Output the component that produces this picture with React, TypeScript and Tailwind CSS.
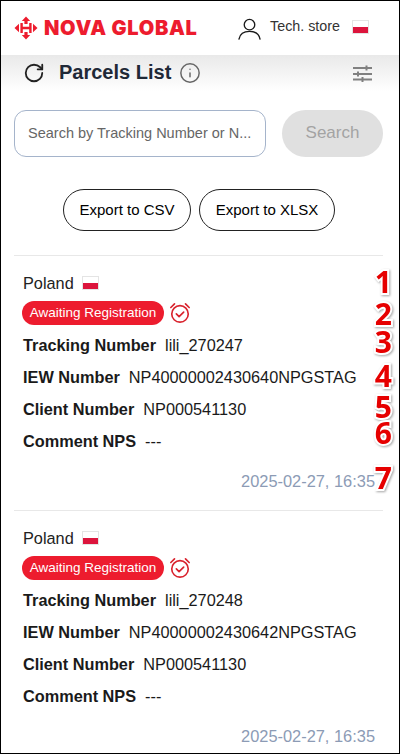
import React from 'react';
import { RotateCw, Info } from 'lucide-react';

const Flag = () => (
  <div className="flex h-[14px] w-[17px] flex-col border border-[#e4e4e4]">
    <div className="h-[6px] bg-white" />
    <div className="flex-1 bg-[#dc143c]" />
  </div>
);

const Logo = () => (
  <div className="flex items-center gap-[6px]">
    <svg width="24" height="24" viewBox="0 0 24 24" fill="#ed1c2e">
      <path d="M12 0.5 L16.2 5 L13.6 5 L13.6 8 L10.4 8 L10.4 5 L7.8 5 Z" />
      <path d="M12 23.5 L7.8 19 L10.4 19 L10.4 16 L13.6 16 L13.6 19 L16.2 19 Z" />
      <path d="M0.5 12 L5 7.8 L5 16.2 Z" />
      <path d="M23.5 12 L19 7.8 L19 16.2 Z" />
      <path d="M6.4 7 L8.8 7 L8.8 10.8 L15.2 10.8 L15.2 7 L17.6 7 L17.6 17 L15.2 17 L15.2 13.2 L8.8 13.2 L8.8 17 L6.4 17 Z" />
    </svg>
    <span className="font-['Inter',sans-serif] text-[20px] leading-none font-black tracking-[0.7px] text-[#ed1c2e]">
      NOVA GLOBAL
    </span>
  </div>
);

const Mark = ({ n, className }: { n: string; className: string }) => (
  <span
    className={`absolute right-[-9px] font-['Open_Sans',sans-serif] text-[30px] leading-none font-bold text-[#e60000] [paint-order:stroke_fill] [-webkit-text-stroke:4px_white] [filter:drop-shadow(1px_1px_1px_rgba(0,0,0,0.35))] ${className}`}
  >
    {n}
  </span>
);

const Field = ({ label, value }: { label: string; value: string }) => (
  <div className="mt-[12px] ml-[1px] flex h-[20px] items-center gap-[9px] text-[16.3px] text-[#1a1a1a]">
    <span className="font-bold">{label}</span>
    <span>{value}</span>
  </div>
);

const Parcel = ({ tracking, iew, marks }: { tracking: string; iew: string; marks?: boolean }) => (
  <div className="relative border-t border-[#e8e8e8] pt-[17px] pr-[8px] pl-[8px]">
    <div className="ml-[1px] flex h-[20px] items-center gap-[8px] text-[16.3px] text-[#222]">
      <span>Poland</span>
      <Flag />
    </div>
    <div className="mt-[8px] mb-[-2px] flex h-[24px] items-center gap-[5px]">
      <span className="flex h-[24px] w-[142px] items-center justify-center rounded-full bg-[#ed1c2e] text-[13.5px] whitespace-nowrap text-white">
        Awaiting Registration
      </span>
      <svg width="22" height="22" viewBox="0 0 24 24" fill="none" stroke="#d9232e" strokeWidth="1.8" strokeLinecap="round" strokeLinejoin="round">
        <circle cx="12" cy="13" r="9" />
        <path d="M8 13l3 3 5-5M2 6l4-4M22 6l-4-4" />
      </svg>
    </div>
    <div className="mt-[4px]" />
    <Field label="Tracking Number" value={tracking} />
    <Field label="IEW Number" value={iew} />
    <Field label="Client Number" value="NP000541130" />
    <Field label="Comment NPS" value="---" />
    <div className="mt-[20px] h-[20px] text-right text-[16.4px] leading-[20px] text-[#8c9bb5]">2025-02-27, 16:35</div>
    <div className="h-[19px]" />
    {marks && (
      <>
        <Mark n="1" className="top-[11px]" />
        <Mark n="2" className="top-[43px]" />
        <Mark n="3" className="top-[71px]" />
        <Mark n="4" className="top-[105px]" />
        <Mark n="5" className="top-[136px]" />
        <Mark n="6" className="top-[162px]" />
        <Mark n="7" className="top-[207px]" />
      </>
    )}
  </div>
);

export default function App() {
  return (
    <div className="box-border h-[754px] overflow-hidden border border-black bg-white font-['Liberation_Sans',sans-serif]">
      <header className="flex h-[54px] items-center justify-between pr-[30px] pl-[13px]">
        <Logo />
        <div className="flex items-center">
          <svg width="23" height="23" viewBox="0 0 24 24" fill="none" stroke="#1a1a1a" strokeWidth="1.4" strokeLinecap="round">
            <circle cx="12" cy="8" r="5.5" />
            <path d="M1 23c1-5 5-8 11-8s10 3 11 8" />
          </svg>
          <span className="mt-[-3px] ml-[9px] text-[14.3px] text-[#333]">Tech. store</span>
          <div className="mt-[-3px] ml-[12px]"><Flag /></div>
        </div>
      </header>
      <div className="flex h-[36px] items-center bg-gradient-to-b from-[#e9e9e9] to-white pr-[27px] pl-[22px]">
        <RotateCw size={22} strokeWidth={2} className="text-[#222]" />
        <h1 className="mt-[-3px] ml-[14px] text-[20px] font-bold text-[#1f2937]">Parcels List</h1>
        <Info size={22} strokeWidth={1.6} className="ml-[8px] text-[#666]" />
        <svg width="19" height="19" viewBox="0 0 19 19" fill="none" stroke="#808080" strokeWidth="2" className="ml-auto">
          <path d="M0 4h19M13.5 1.5v5M0 10h19M5 7.5v5M0 15.5h19M9.5 13v5" />
        </svg>
      </div>
      <div className="mt-[19px] flex gap-[16px] px-[13px]">
        <div className="flex h-[47px] w-[252px] items-center rounded-[12px] border border-[#a5b4cb] pl-[13px] text-[14.5px] whitespace-nowrap text-[#666]">
          Search by Tracking Number or N...
        </div>
        <div className="flex h-[47px] w-[101px] items-center justify-center rounded-full bg-[#e0e0e0] pb-[2px] text-[17px] text-[#a3a3a3]">
          Search
        </div>
      </div>
      <div className="mt-[32px] flex justify-center gap-[8px] pr-[2px]">
        <div className="flex h-[42px] w-[128px] items-center justify-center rounded-full border border-[#222] text-[15px] text-black">Export to CSV</div>
        <div className="flex h-[42px] w-[136px] items-center justify-center rounded-full border border-[#222] text-[15px] text-black">Export to XLSX</div>
      </div>
      <div className="mt-[24px] mr-[16px] ml-[13px]">
        <Parcel tracking="lili_270247" iew="NP40000002430640NPGSTAG" marks />
        <Parcel tracking="lili_270248" iew="NP40000002430642NPGSTAG" />
      </div>
    </div>
  );
}
